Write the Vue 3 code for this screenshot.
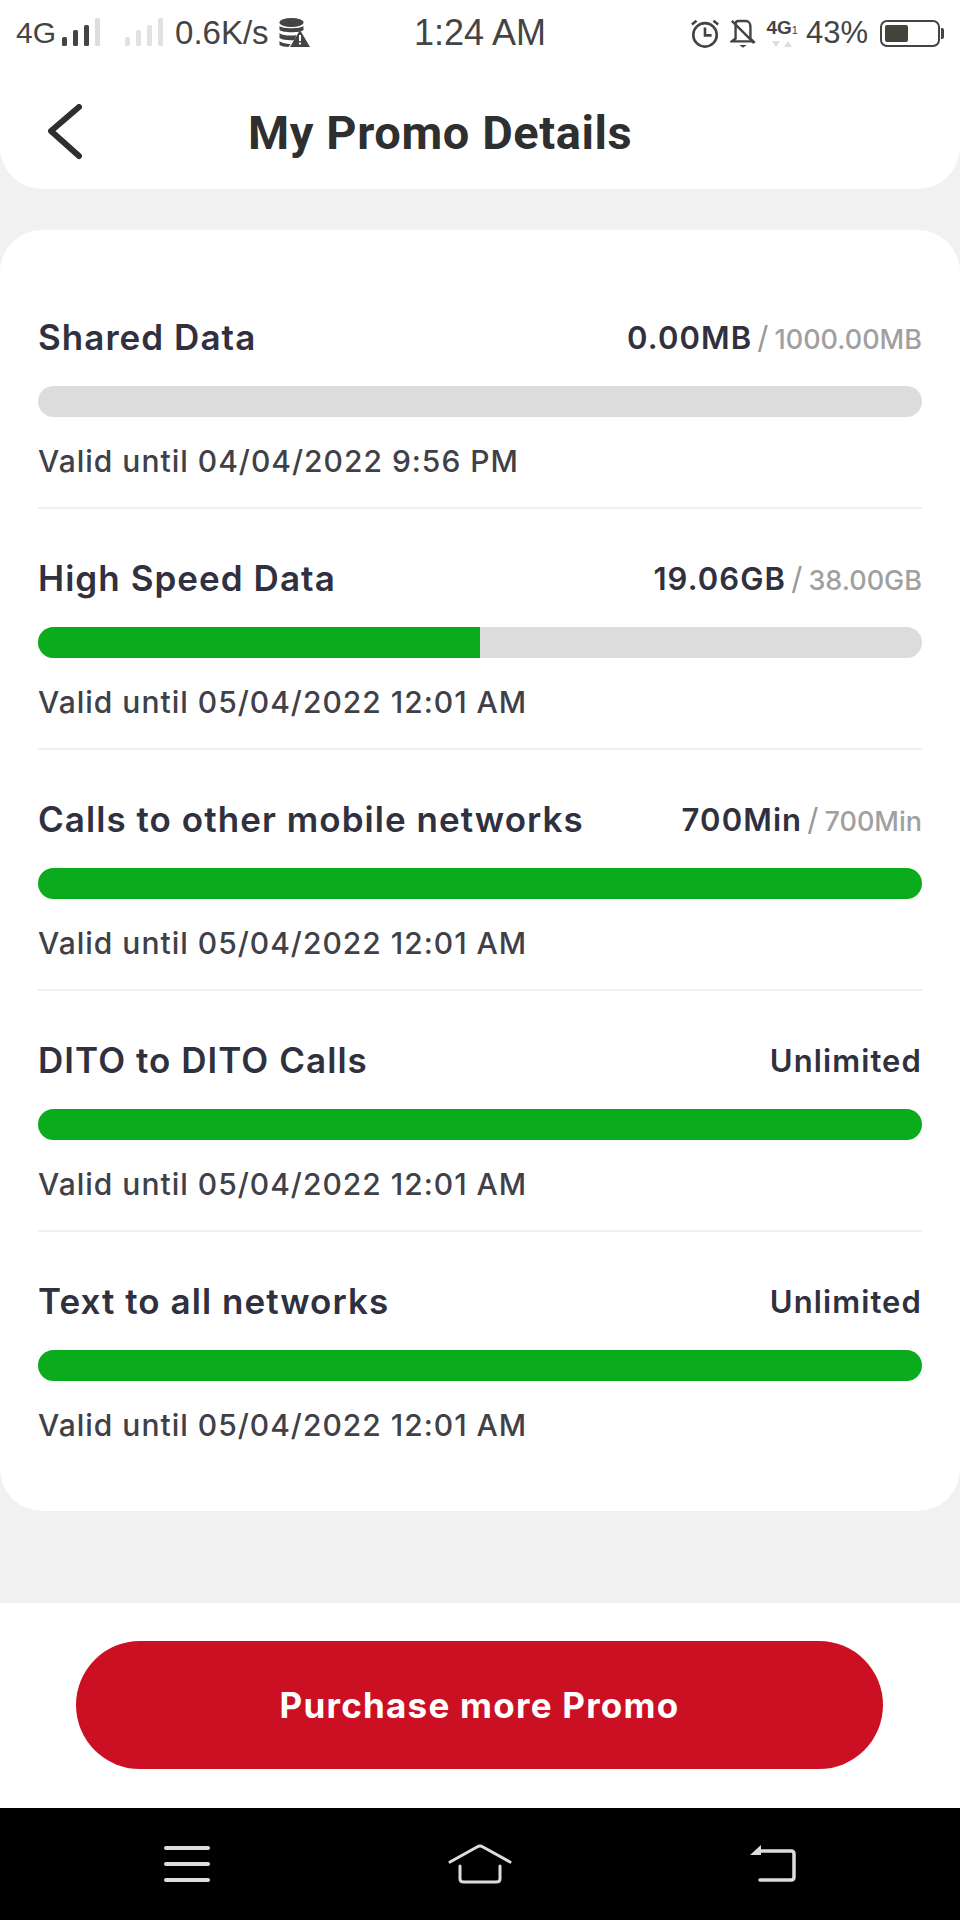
<template>
  <div class="page">
    <header class="top">
      <div class="status">
        <div class="status-side">
          <span>4G</span>
          <svg class="signal" width="42" height="30" viewBox="0 0 42 30">
            <rect x="0" y="19" width="5" height="9" rx="1.5" fill="#444" />
            <rect x="11" y="12" width="5" height="16" rx="1.5" fill="#444" />
            <rect x="22" y="7" width="5" height="21" rx="1.5" fill="#444" />
            <rect x="33" y="0" width="5" height="28" rx="1.5" fill="#ddd" />
          </svg>
          <svg class="signal second" width="42" height="30" viewBox="0 0 42 30">
            <rect x="0" y="19" width="5" height="9" rx="1.5" fill="#e2e2e2" />
            <rect x="11" y="12" width="5" height="16" rx="1.5" fill="#e2e2e2" />
            <rect x="22" y="7" width="5" height="21" rx="1.5" fill="#e2e2e2" />
            <rect x="33" y="0" width="5" height="28" rx="1.5" fill="#e2e2e2" />
          </svg>
          <span class="speed">0.6K/s</span>
          <svg class="db" width="32" height="30" viewBox="0 0 32 30">
            <ellipse cx="12.500" cy="4.500" rx="12" ry="4.500" fill="#444" />
            <path d="M.5 8c3 3 21 3 24 0v4c-3 3-21 3-24 0zM.5 15c3 3 14 3 17 2l-2 5c-5 .5-12 0-15-2zM.5 23c2 2 7 3 11 3l-2 3c-4 0-7-1-9-2z" fill="#444" />
            <path d="M21 12l10 17H11z" fill="#444" />
            <rect x="20" y="17" width="2" height="6" fill="#fff" />
            <rect x="20" y="24.500" width="2" height="2" fill="#fff" />
          </svg>
        </div>
        <span class="clock">1:24 AM</span>
        <div class="status-side right">
          <svg width="30" height="32" viewBox="0 0 32 32" fill="none" stroke="#444" stroke-width="2.800">
            <circle cx="16" cy="18" r="12.500" />
            <path d="M16 10v8.500h7M2 7l5-4M30 7l-5-4" />
          </svg>
          <svg class="bell" width="26" height="32" viewBox="0 0 28 32" fill="none" stroke="#444" stroke-width="2.600">
            <path d="M6 22V6c0-2 1-3 3-3h8c3 0 5 3 5 6v13l3 3H2z" />
            <path d="M2 3l24 24" />
            <path d="M10 29h8l-4 3z" fill="#444" stroke="none" />
          </svg>
          <div class="net">
            <span class="net-label">4G<small>1</small></span>
            <svg width="24" height="8" viewBox="0 0 24 8"><path d="M2 1h8L6 7zM18 1l4 6h-8z" fill="#ddd" /></svg>
          </div>
          <span class="pct">43%</span>
          <div class="battery"><div class="battery-fill"></div></div>
        </div>
      </div>
      <div class="title-row">
        <svg class="back" width="34" height="56" viewBox="0 0 34 56" fill="none" stroke="#2f2f2f" stroke-width="6" stroke-linecap="round" stroke-linejoin="round">
          <path d="M31 3L3 27l28 25" />
        </svg>
        <h1>My Promo Details</h1>
      </div>
    </header>

    <main class="content">
      <section class="card">
        <div v-for="item in items" :key="item.name" class="row">
          <div class="row-head">
            <span class="name">{{ item.name }}</span>
            <span class="amount">{{ item.used }}<template v-if="item.total"><span class="slash">/</span><span class="total">{{ item.total }}</span></template></span>
          </div>
          <div class="bar"><div class="bar-fill" :style="{ width: item.pct + '%' }"></div></div>
          <div class="valid">{{ item.valid }}</div>
        </div>
      </section>
    </main>

    <footer class="footer">
      <button class="buy">Purchase more Promo</button>
    </footer>

    <nav class="nav">
      <svg width="46" height="38" viewBox="0 0 46 38" stroke="#ddd" stroke-width="4" stroke-linecap="round">
        <path d="M2 3h42M2 19h42M2 35h42" />
      </svg>
      <svg width="64" height="40" viewBox="0 0 64 40" fill="none" stroke="#ddd" stroke-width="3" stroke-linecap="round" stroke-linejoin="round">
        <path d="M2 18L29 3q3-2 6 0l27 15" />
        <path d="M12 22v13q0 3 4 3h32q4 0 4-3V22" />
      </svg>
      <svg width="46" height="38" viewBox="0 0 46 38" fill="none" stroke="#ddd" stroke-width="3.500" stroke-linecap="round">
        <path d="M10 6h31q3 0 3 3v23q0 3-3 3H10" />
        <path d="M11 0v10H0z" fill="#ddd" stroke="none" />
      </svg>
    </nav>
  </div>
</template>

<script setup>
const items = [
  { name: 'Shared Data', used: '0.00MB', total: '1000.00MB', pct: 0, valid: 'Valid until 04/04/2022 9:56 PM' },
  { name: 'High Speed Data', used: '19.06GB', total: '38.00GB', pct: 50, valid: 'Valid until 05/04/2022 12:01 AM' },
  { name: 'Calls to other mobile networks', used: '700Min', total: '700Min', pct: 100, valid: 'Valid until 05/04/2022 12:01 AM' },
  { name: 'DITO to DITO Calls', used: 'Unlimited', pct: 100, valid: 'Valid until 05/04/2022 12:01 AM' },
  { name: 'Text to all networks', used: 'Unlimited', pct: 100, valid: 'Valid until 05/04/2022 12:01 AM' },
]
</script>

<style>
html,
body {
  margin: 0;
  background: #f1f1f1;
}
</style>

<style scoped>
.page {
  width: 960px;
  height: 1920px;
  display: flex;
  flex-direction: column;
  background: #f1f1f1;
  font-family: "Inter", "Liberation Sans", sans-serif;
}

.top {
  height: 189px;
  box-sizing: border-box;
  background: #fff;
  border-radius: 0 0 42px 42px;
  padding: 0 16px 0;
}

.status {
  height: 66px;
  display: grid;
  grid-template-columns: 398px 140px 1fr;
  align-items: center;
  font-family: "Liberation Sans", Arial, sans-serif;
  font-size: 30px;
  color: #444;
}

.status-side {
  display: flex;
  align-items: center;
  gap: 6px;
}

.status-side.right {
  justify-content: flex-end;
  gap: 8px;
}

.signal.second {
  margin-left: 15px;
}

.speed {
  font-size: 33px;
  margin-left: 2px;
}

.db {
  margin-left: 4px;
}

.clock {
  font-size: 36px;
  white-space: nowrap;
}

.bell {
  margin-left: 2px;
}

.net {
  display: flex;
  flex-direction: column;
  align-items: center;
  margin-left: 2px;
}

.net-label {
  font-size: 19px;
  font-weight: 700;
  line-height: 20px;
}

.net-label small {
  font-size: 11px;
  font-weight: 400;
}

.pct {
  font-size: 31px;
}

.battery {
  position: relative;
  width: 60px;
  height: 27px;
  border: 2px solid #444;
  border-radius: 7px;
  padding: 3px;
  box-sizing: border-box;
  margin-left: 4px;
  margin-right: 4px;
}

.battery::after {
  content: "";
  position: absolute;
  right: -6px;
  top: 6px;
  width: 3px;
  height: 11px;
  background: #444;
  border-radius: 0 2px 2px 0;
}

.battery-fill {
  width: 46%;
  height: 100%;
  background: #44443c;
  border-radius: 2px;
}

.title-row {
  display: flex;
  align-items: center;
  height: 100px;
  margin-top: 16px;
  padding-left: 32px;
}

.title-row h1 {
  margin: 0 0 0 166px;
  font-family: "Roboto", sans-serif;
  font-size: 47px;
  font-weight: 700;
  color: #2f2f2f;
  letter-spacing: 0.6px;
}

.content {
  flex: 1;
  padding-top: 41px;
}

.card {
  height: 1281px;
  box-sizing: border-box;
  background: #fff;
  border-radius: 42px;
  padding: 86px 38px 0;
}

.row {
  height: 193px;
  box-sizing: border-box;
  margin-bottom: 48px;
  border-bottom: 2px solid #f0f0f0;
}

.row:last-child {
  border-bottom: none;
  margin-bottom: 0;
}

.row-head {
  display: flex;
  justify-content: space-between;
  align-items: center;
  height: 42px;
}

.name {
  font-size: 35px;
  font-weight: 600;
  letter-spacing: 1.05px;
  color: #30303f;
}

.amount {
  font-size: 31px;
  font-weight: 600;
  letter-spacing: 1.1px;
  color: #30303f;
}

.slash {
  color: #999;
  font-weight: 400;
  margin: 0 5px;
}

.total {
  color: #a0a0a0;
  font-size: 27px;
  font-weight: 500;
  letter-spacing: 0;
}

.bar {
  height: 31px;
  margin-top: 28px;
  background: #dcdcdc;
  border-radius: 16px;
  overflow: hidden;
}

.bar-fill {
  height: 100%;
  background: #0aab1c;
}

.valid {
  margin-top: 24px;
  font-size: 30px;
  font-weight: 500;
  letter-spacing: 1px;
  line-height: 40px;
  color: #404048;
}

.footer {
  height: 205px;
  box-sizing: border-box;
  background: #fff;
  padding: 38px 77px 0 76px;
}

.buy {
  display: block;
  width: 100%;
  height: 128px;
  border: none;
  border-radius: 64px;
  background: #cc1024;
  color: #fff;
  font-family: inherit;
  font-size: 35px;
  font-weight: 700;
  letter-spacing: 1.25px;
}

.nav {
  height: 112px;
  background: #000;
  display: flex;
  align-items: center;
  justify-content: space-between;
  padding: 0 164px;
}
</style>
